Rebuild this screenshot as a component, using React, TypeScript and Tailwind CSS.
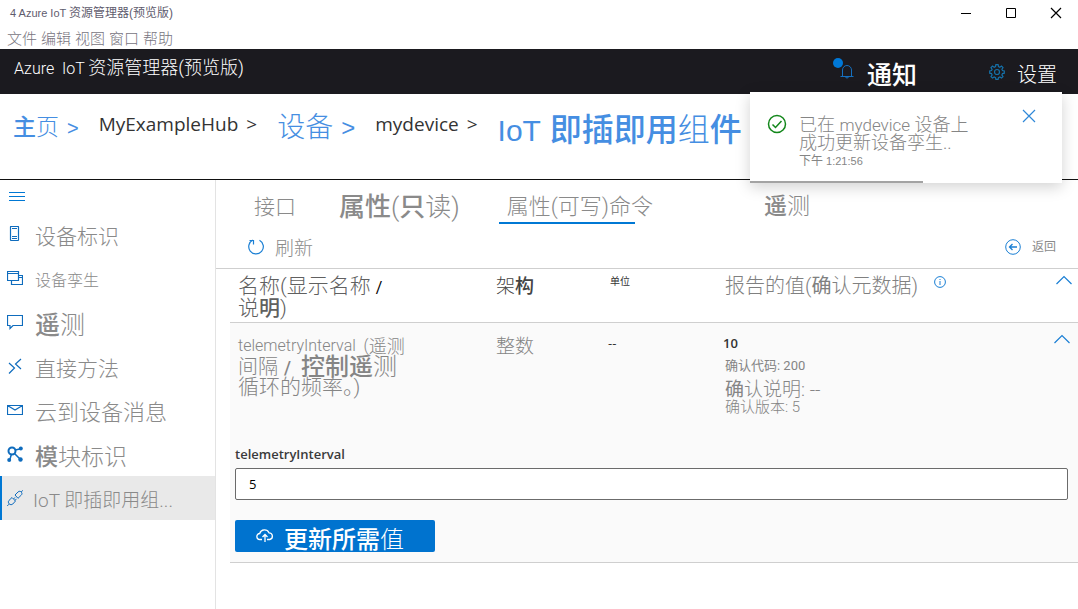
import type { ReactNode } from 'react';

const sans = "font-['Liberation_Sans','Noto_Sans_CJK_SC',sans-serif]";
const thin = "font-['Roboto','Noto_Sans_CJK_SC',sans-serif]";
const segoe = "font-['Open_Sans','Noto_Sans_CJK_SC',sans-serif]";

function Icon({ children, size = 16, className = '' }: { children: ReactNode; size?: number; className?: string }) {
  return (
    <svg
      width={size}
      height={size}
      viewBox={`0 0 ${size} ${size}`}
      fill="none"
      stroke="currentColor"
      strokeWidth="1"
      aria-hidden="true"
      className={`shrink-0 ${className}`}
    >
      {children}
    </svg>
  );
}

const deviceIcon = (
  <Icon>
    <rect x="3.5" y="0.5" width="8" height="14" rx="0.5" strokeWidth="1.2" />
    <path d="M5 2.500h5M5 10.500h5M5 12.500h5" />
  </Icon>
);
const twinIcon = (
  <Icon>
    <path d="M0.5 1.500h11v9h-11zM0.5 3.500h11M11.5 5.500h4v9h-11v-4M11.5 7.500h4" strokeWidth="1.200" />
  </Icon>
);
const commentIcon = (
  <Icon>
    <path d="M0.5 1.500h15v10h-9.500l-3 3v-3h-2.500z" strokeWidth="1.200" />
  </Icon>
);
const methodIcon = (
  <Icon>
    <path d="M2 5l5.500 5L2 15.500M14 1L8.500 6l5.500 5" strokeWidth="1.200" />
  </Icon>
);
const mailIcon = (
  <Icon>
    <path d="M0.5 3.500h15v9h-15zM0.5 3.500L8 8l7.500-4.500" strokeWidth="1.200" />
  </Icon>
);
const moduleIcon = (
  <Icon>
    <circle cx="5" cy="5" r="3.500" strokeWidth="2" />
    <path d="M8 4l5-1M4.500 8L3 13M7.500 7.500L13 13" strokeWidth="1.500" />
    <circle cx="13.800" cy="2.500" r="2" fill="currentColor" stroke="none" />
    <circle cx="2.200" cy="14" r="2" fill="currentColor" stroke="none" />
    <circle cx="13.500" cy="13.500" r="2.200" fill="currentColor" stroke="none" />
  </Icon>
);
const plugIcon = (
  <Icon>
    <path d="M8 5l3-3c1.200-1.200 2.800-.8 3.300.2 1 1 .8 2-.1 3L11 8.300zM5 7.500L8.500 11l-2.700 3c-1 1-2.800.8-3.600-.1-1-1-1.200-2.500-.2-3.500zM14.200 2L16 .2M2 14.200L.2 16M6.500 9l1.500-1.600M8 10.400l1.500-1.600" />
  </Icon>
);

const navItems = [
  { icon: deviceIcon, label: '设备标识', size: 'text-[21px]' },
  { icon: twinIcon, label: '设备孪生', size: 'text-[16px]' },
  { icon: commentIcon, label: <><b className="font-medium">遥</b>测</>, size: 'text-[25px]' },
  { icon: methodIcon, label: '直接方法', size: 'text-[21px]' },
  { icon: mailIcon, label: '云到设备消息', size: 'text-[22px]' },
  { icon: moduleIcon, label: <><b className="font-medium">模</b>块标识</>, size: 'text-[23px]' },
];

function ChevronUp() {
  return (
    <Icon size={18}>
      <path d="M1.500 13L9 5.500l7.500 7.500" strokeWidth="1.200" />
    </Icon>
  );
}

function TitleBar() {
  return (
    <div className="flex items-start justify-between pl-[10px]">
      <h1 className="text-[11px] leading-[26px] text-[#5f5c6e]">
        4 Azure IoT <span className="text-[12px]">资源管理器(预览版)</span>
      </h1>
      <div className="flex text-black">
        <button type="button" aria-label="最小化" className="flex h-[26px] w-[45px] items-center justify-center">
          <Icon size={12}><path d="M1 6.500h10" /></Icon>
        </button>
        <button type="button" aria-label="最大化" className="flex h-[26px] w-[45px] items-center justify-center">
          <Icon size={12}><path d="M1.500 1.500h9v9h-9z" /></Icon>
        </button>
        <button type="button" aria-label="关闭窗口" className="flex h-[26px] w-[45px] items-center justify-center">
          <Icon size={12}><path d="M1 1l10 10M11 1L1 11" strokeWidth="1.200" /></Icon>
        </button>
      </div>
    </div>
  );
}

function Toast() {
  return (
    <div
      role="status"
      className="absolute top-[43px] right-4 z-10 w-[312px] bg-white text-[#858585] shadow-[0_4px_14px_rgba(0,0,0,0.18)]"
    >
      <div className="flex items-start pt-[22px] pr-[25px] pb-3 pl-[17px]">
        <Icon size={20} className="text-[#13871b]">
          <circle cx="10" cy="10" r="8.500" strokeWidth="1.500" />
          <path d="M5.500 10.500l3 3 6-6.500" strokeWidth="1.500" />
        </Icon>
        <div className="ml-3 grow pt-0.5">
          <p className={`text-[18px] leading-[17px] font-light whitespace-nowrap ${thin}`}>
            已在 <span className="text-[17px]">mydevice</span> 设备上
            <br />
            成功更新设备孪生..
          </p>
          <p className="mt-0.5 text-[11px] leading-[16px]"><span className="text-[12px]">下午</span> 1:21:56</p>
        </div>
        <button type="button" aria-label="关闭通知" className="-mt-1.5 text-[#2f88d8]">
          <Icon size={16}><path d="M2 2l12 12M14 2L2 14" strokeWidth="1.200" /></Icon>
        </button>
      </div>
      <div className="h-[2px] w-[173px] bg-[#a3a3a3]" />
    </div>
  );
}

function AppHeader() {
  return (
    <header className="relative flex h-[45px] justify-between bg-[#1b1a1f] pr-[21px] pl-[14px] text-white">
      <div className={`text-[16px] leading-[38px] font-light whitespace-pre ${thin}`}>
        Azure  IoT <span className="text-[18px]">资源管理器(预览版)</span>
      </div>
      <div className="flex items-center gap-[72px] pt-1.5">
        <button type="button" className="flex items-center gap-3">
          <span className="relative -mt-1.5 text-[#1570c0]">
            <Icon>
              <path d="M3.500 12.500V6a4.500 4.500 0 019 0v6.500M1.500 12.500h13M6.500 12.500a1.500 1.500 0 003 0" />
            </Icon>
            <span className="absolute -top-1.5 -left-1.5 size-[10px] rounded-full bg-[#0078d7]" />
          </span>
          <span className="text-[25px] leading-[30px] font-medium">通知</span>
        </button>
        <button type="button" className="flex items-center gap-3">
          <Icon className="-mt-1.5 text-[#1570a8]">
            <circle cx="8" cy="8" r="2.500" strokeWidth="1.200" />
            <path
              strokeWidth="1.200"
              d="M6.900.7h2.200l.4 1.900 1.300.6 1.700-1.100 1.500 1.500-1.100 1.700.6 1.300 1.800.4v2.200l-1.800.4-.6 1.300 1.100 1.700-1.500 1.500-1.700-1.100-1.300.6-.4 1.800H6.900l-.4-1.800-1.300-.6-1.700 1.100L2 12.600l1.100-1.700-.6-1.300-1.800-.4V7l1.800-.4.6-1.300L2 3.600l1.500-1.500 1.700 1.100 1.300-.6z"
            />
          </Icon>
          <span className="text-[20px] leading-[30px] font-light">设置</span>
        </button>
      </div>
      <Toast />
    </header>
  );
}

function Breadcrumb() {
  const link = 'text-[#458ee2]';
  return (
    <nav aria-label="路径" className="border-b border-[#111] pb-[18px] pl-[13px]">
      <ol className="flex h-[67px] items-center gap-[20px] whitespace-nowrap">
        <li className={`flex items-center gap-2 text-[23px] ${link}`}>
          <a href="#home"><b className="font-medium">主</b><span className="font-light">页</span></a>
          <span className="text-[20px]">&gt;</span>
        </li>
        <li className={`flex items-center gap-2 pb-1.5 text-[19px] text-[#333] ${segoe}`}>
          <a href="#hub">MyExampleHub</a>
          <span>&gt;</span>
        </li>
        <li className={`flex items-center gap-2 text-[28px] ${link}`}>
          <a href="#devices" className="font-light">设备</a>
          <span className="text-[24px]">&gt;</span>
        </li>
        <li className={`flex items-center gap-2 pb-1.5 text-[19px] text-[#333] ${segoe}`}>
          <a href="#device">mydevice</a>
          <span>&gt;</span>
        </li>
        <li aria-current="page" className={`pt-1 text-[32px] ${link}`}>
          <span className="text-[30px]">IoT</span> <b className="font-medium">即插即用</b><span className="font-light">组</span><b className="font-medium">件</b>
        </li>
      </ol>
    </nav>
  );
}

function Sidebar() {
  return (
    <aside className="w-[216px] shrink-0 border-r border-[#e3e3e3] text-[#0f6cbd]">
      <button type="button" aria-label="切换导航" className="flex h-8 items-center pl-[9px]">
        <Icon className="text-[#0078d4]"><path d="M0 4.500h16M0 8.500h16M0 12.500h16" /></Icon>
      </button>
      <ul>
        {navItems.map((item, i) => (
          <li key={i}>
            <a href="#section" className="flex h-11 items-center pl-[7px]">
              {item.icon}
              <span className={`ml-3 pt-1.5 leading-[30px] font-light text-[#8a8a8a] ${item.size}`}>{item.label}</span>
            </a>
          </li>
        ))}
        <li>
          <a
            href="#pnp"
            aria-current="page"
            className="flex h-11 items-center border-l-2 border-[#0078d4] bg-[#e9e9e9] pl-[5px]"
          >
            {plugIcon}
            <span className={`ml-2.5 pt-1.5 text-[19px] leading-[30px] font-light text-[#8a8a8a] ${thin}`}>IoT 即插即用组...</span>
          </a>
        </li>
      </ul>
    </aside>
  );
}

function Tabs() {
  return (
    <div
      role="tablist"
      className={`flex h-[45px] items-center pt-2 pl-[38px] leading-[32px] whitespace-nowrap text-[#8a8a8a] ${thin}`}
    >
      <button type="button" role="tab" aria-selected="false" className="text-[21px] font-light">接口</button>
      <button type="button" role="tab" aria-selected="false" className="ml-[43px] text-[26px] font-light">
        <b className="font-medium">属性</b>(<b className="font-medium">只</b>读)
      </button>
      <button type="button" role="tab" aria-selected="true" className="relative ml-[39px] pl-2 text-[22px] font-light">
        属性(可写)
        <span className="absolute -bottom-px left-0 h-[2px] w-[136px] bg-[#0078d4]" />
      </button>
      <button type="button" role="tab" aria-selected="false" className="text-[22px] font-light">命令</button>
      <button type="button" role="tab" aria-selected="false" className="ml-[111px] text-[23px]">
        <b className="font-medium">遥</b><span className="font-light">测</span>
      </button>
    </div>
  );
}

function CommandBar() {
  return (
    <div className="flex h-[44px] items-center justify-between border-b border-[#cfcfcf] pr-[22px] pl-8 text-[#8a8a8a]">
      <button type="button" className="flex items-center gap-[11px]">
        <Icon className="text-[#1a7fd4]">
          <path d="M11.500 1.200a7.300 7.300 0 11-6.500-.2M1.500 1.500h4v4" strokeWidth="1.200" />
        </Icon>
        <span className="pt-1 text-[19px] leading-[26px] font-light">刷新</span>
      </button>
      <button type="button" className="flex items-center gap-[11px]">
        <Icon className="text-[#1a7fd4]">
          <circle cx="8" cy="8" r="7.300" />
          <path d="M4.500 8h7.500M7.500 5L4.500 8l3 3" strokeWidth="1.300" />
        </Icon>
        <span className="text-[12px]">返回</span>
      </button>
    </div>
  );
}

function PropertyTable() {
  const cell = `px-2 align-top text-left font-light ${thin}`;
  return (
    <table className="w-full table-fixed border-collapse">
      <colgroup>
        <col className="w-[258px]" />
        <col className="w-[114px]" />
        <col className="w-[115px]" />
        <col />
        <col className="w-[36px]" />
      </colgroup>
      <thead>
        <tr className="h-[53px] border-b border-[#cfcfcf] text-[#606060]">
          <th className={`${cell} pt-[7px] text-[21px] leading-[21px]`}>
            名称(显示名称 <b className="text-[16px] text-black">/</b>
            <br />
            说<b className="font-medium">明</b>)
          </th>
          <th className={`${cell} pt-[7px] text-[19px] leading-[21px] text-[#444]`}>架<b className="font-medium">构</b></th>
          <th className={`${cell} pt-[7px] text-[10px] leading-[12px] text-[#333]`}><span className="font-normal">单位</span></th>
          <th className={`${cell} pt-[5px] whitespace-nowrap text-[#808080]`}>
            <span className="flex items-start gap-4">
              <span className="pt-0.5 text-[20px] leading-[21px]">报告的值(<b className="font-normal">确</b>认元数据)</span>
              <button type="button" aria-label="详细信息" className="pt-0.5 text-[#1a7fd4]">
                <Icon size={12}>
                  <circle cx="6" cy="6" r="5.400" />
                  <path d="M6 5v4M6 3v1" />
                </Icon>
              </button>
            </span>
          </th>
          <th className="pt-0.5 pl-[13px] align-top text-[#1a7fd4]">
            <button type="button" aria-label="全部折叠" className="block"><ChevronUp /></button>
          </th>
        </tr>
      </thead>
      <tbody className="bg-[#fafafa]">
        <tr className="text-[#858585]">
          <td className={`${cell} pt-[13px] whitespace-nowrap`}>
            <div className="flex h-[21px] items-center text-[16px]">
              telemetryInterval&nbsp; (<span className="text-[18px]">遥测</span>
            </div>
            <div className="flex h-[21px] items-center text-[20px]">
              间隔<b className="px-1.5 text-[18px] font-medium">/</b>
              <span className="pl-1 text-[24px]"><b className="font-medium">控制遥</b>测</span>
            </div>
            <div className="flex h-[21px] items-center text-[21px]">循环的频率。)</div>
          </td>
          <td className={`${cell} pt-[13px] text-[19px] leading-[22px]`}>整数</td>
          <td className={`px-1.5 pt-[11px] align-top text-[13px] leading-[18px] text-[#333] ${segoe}`}>--</td>
          <td className="px-1.5 pt-[11px] align-top">
            <p className={`text-[13px] leading-[18px] font-semibold text-[#333] ${segoe}`}>10</p>
            <div className={`pl-0.5 font-light ${thin}`}>
              <p className="mt-1 text-[13px] leading-[20px] font-normal">确认代码: 200</p>
              <p className="mt-1 text-[19px] leading-[20px]"><b className="font-normal">确</b>认说明: --</p>
              <p className="text-[15px] leading-[15px]">确认版本: 5</p>
            </div>
          </td>
          <td className="pt-[7px] pl-[11px] align-top text-[#1a7fd4]">
            <button type="button" aria-label="折叠" className="block"><ChevronUp /></button>
          </td>
        </tr>
        <tr className="border-b border-[#cfcfcf]">
          <td colSpan={5} className="pt-[30px] pr-[10px] pb-[10px] pl-[5px]">
            <label htmlFor="interval" className={`block text-[13px] leading-[18px] font-semibold text-[#3a3a3a] ${segoe}`}>
              telemetryInterval
            </label>
            <input
              id="interval"
              type="text"
              defaultValue="5"
              className={`mt-[5px] block h-8 w-full rounded-[2px] border border-[#6b6b6b] bg-white px-[13px] text-[13px] text-black ${segoe}`}
            />
            <button type="button" className="mt-5 flex h-8 w-[200px] items-center rounded-[2px] bg-[#0073cf] pl-[21px] text-white">
              <Icon size={18}>
                <path d="M6 12.500H4a3 3 0 01-.3-6A5 5 0 0113 5.800a3.400 3.400 0 01.8 6.700H11M9 15V8M6.500 10L9 7.500l2.500 2.500" strokeWidth="1.300" />
              </Icon>
              <span className="ml-[10px] pt-2 text-[24px] leading-[28px]">
                <b className="font-medium">更新所需</b><span className="font-light">值</span>
              </span>
            </button>
          </td>
        </tr>
      </tbody>
    </table>
  );
}

export default function App() {
  return (
    <div className={`flex min-h-screen flex-col bg-white ${sans}`}>
      <TitleBar />
      <ul className="flex h-[23px] items-center gap-1 pt-1 pl-[7px] text-[15px] font-light text-[#77747e]">
        {['文件', '编辑', '视图', '窗口', '帮助'].map((m) => (
          <li key={m}><button type="button">{m}</button></li>
        ))}
      </ul>
      <AppHeader />
      <Breadcrumb />
      <div className="flex grow">
        <Sidebar />
        <main className="min-w-0 grow">
          <Tabs />
          <CommandBar />
          <div className="pl-[14px]">
            <PropertyTable />
          </div>
        </main>
      </div>
    </div>
  );
}
